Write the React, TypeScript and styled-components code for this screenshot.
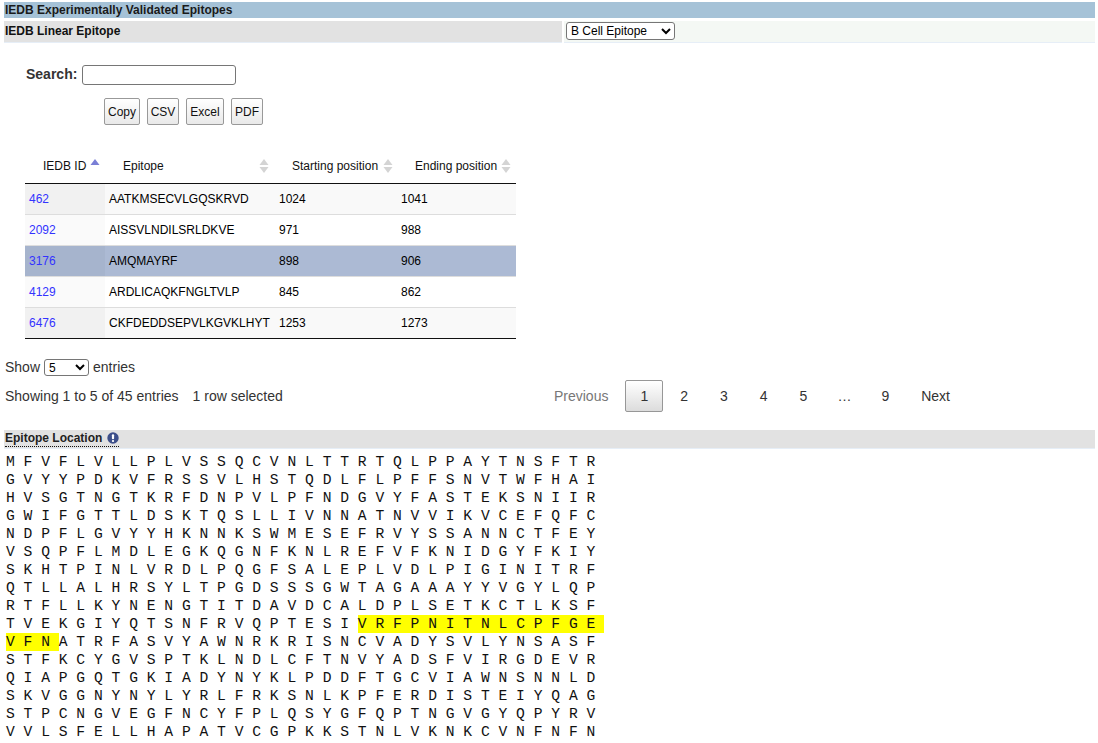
import React from "react";
import styled, { createGlobalStyle } from "styled-components";

const Global = createGlobalStyle`
  html, body { margin: 0; padding: 0; height: 743px; overflow: hidden; background: #fff; }
  body { font-family: "Liberation Sans", Arial, sans-serif; color: #000; }
`;

const Page = styled.div`
  width: 1098px;
  padding: 2px 3px 0 4px;
  box-sizing: border-box;
`;
const TitleBar = styled.div`
  height: 16px;
  line-height: 17px;
  background: #a5c2d7;
  font-size: 12px;
  font-weight: bold;
  color: #1a1a1a;
  padding-left: 1px;
`;
const SubRow = styled.div`
  display: grid;
  grid-template-columns: 558px 1fr;
  column-gap: 2px;
  height: 21px;
  margin-top: 3px;
`;
const SubLabel = styled.div`
  background: #e2e2e2;
  border-bottom: 1px solid #e6eef7;
  font-size: 12px;
  font-weight: bold;
  line-height: 21px;
  padding-left: 1px;
  color: #111;
`;
const SubControl = styled.div`
  background: #f4f8f4;
  border-bottom: 1px solid #e6eef7;
  padding: 1px 0 0 2px;
`;
const NativeSelect = styled.select<{ $w: number }>`
  width: ${(p) => p.$w}px;
  height: ${(p) => (p.$w > 60 ? 18 : 17)}px;
  box-sizing: border-box;
  display: block;
  font-family: "Liberation Sans", Arial, sans-serif;
  font-size: 12px;
  padding: 0;
  background: #fff;
  border: 1px solid #767676;
  border-radius: 3px;
  color: #000;
`;
const SearchRow = styled.div`
  display: flex;
  align-items: center;
  margin: 23px 0 0 22px;
  height: 20px;
`;
const SearchLabel = styled.label`
  font-size: 14px;
  font-weight: bold;
  color: #333;
  margin-right: 5px;
  position: relative;
  top: -1px;
`;
const SearchInput = styled.input`
  width: 154px;
  height: 20px;
  box-sizing: border-box;
  border: 1px solid #767676;
  border-radius: 3px;
  padding: 0 2px;
  background: #fff;
`;
const ButtonRow = styled.div`
  display: flex;
  gap: 7px;
  margin: 13px 0 0 100px;
`;
const ToolButton = styled.button<{ $w: number }>`
  width: ${(p) => p.$w}px;
  height: 27px;
  box-sizing: border-box;
  padding: 0;
  border: 1px solid #999;
  border-radius: 2px;
  background: linear-gradient(#fff, #e9e9e9);
  font-family: "Liberation Sans", Arial, sans-serif;
  font-size: 12px;
  color: #111;
`;
const Table = styled.table`
  width: 491px;
  margin: 25px 0 0 21px;
  border-collapse: collapse;
  table-layout: fixed;
  font-size: 12px;
`;
const HeadRow = styled.tr`
  height: 33px;
  border-bottom: 1px solid #111;
`;
const HeadCell = styled.th<{ $w: number; $pad: number }>`
  width: ${(p) => p.$w}px;
  padding: 0 0 0 ${(p) => p.$pad}px;
  box-sizing: border-box;
  font-weight: normal;
  text-align: left;
  color: #111;
`;
const HeadInner = styled.div<{ $gap: number }>`
  display: flex;
  align-items: center;
  justify-content: flex-start;
  gap: ${(p) => p.$gap}px;
`;
const Row = styled.tr<{ $bg: string }>`
  height: 31px;
  background: ${(p) => p.$bg};
  border-bottom: 1px solid #ddd;
  &:last-child { border-bottom: 1px solid #111; }
`;
const Cell = styled.td<{ $bg?: string }>`
  padding: 0 0 0 4px;
  box-sizing: border-box;
  white-space: nowrap;
  background: ${(p) => p.$bg || "transparent"};
`;
const IdLink = styled.a`
  color: #3333ff;
  text-decoration: none;
`;
const ShowRow = styled.div`
  display: flex;
  align-items: center;
  gap: 4px;
  margin: 20px 0 0 1px;
  height: 17px;
  font-size: 14px;
  color: #333;
`;
const FooterRow = styled.div`
  display: flex;
  justify-content: space-between;
  align-items: center;
  width: 960px;
  margin: 4px 0 0 1px;
  font-size: 14px;
  color: #333;
`;
const Info = styled.div`
  display: flex;
  gap: 14px;
`;
const Pager = styled.div`
  display: flex;
`;
const PageButton = styled.span<{ $current?: boolean; $muted?: boolean }>`
  box-sizing: border-box;
  height: 32px;
  line-height: 30px;
  padding: 0 14px;
  margin-left: 2px;
  border: 1px solid ${(p) => (p.$current ? "#979797" : "transparent")};
  border-radius: 2px;
  color: ${(p) => (p.$muted ? "#777" : "#333")};
  background: ${(p) => (p.$current ? "linear-gradient(#fff, #dcdcdc)" : "transparent")};
`;
const Ellipsis = styled.span`
  line-height: 32px;
  padding: 0 13px;
  margin-left: 2px;
  color: #333;
`;
const SectionBar = styled.div`
  display: flex;
  align-items: center;
  height: 18px;
  margin-top: 18px;
  background: #e2e2e2;
  border-bottom: 1px solid #e6eef7;
  padding-left: 1px;
`;
const SectionTitle = styled.span`
  display: inline-flex;
  align-items: center;
  gap: 5px;
  font-size: 12px;
  font-weight: bold;
  color: #222;
  border-bottom: 1px dotted #111;
  height: 16px;
  line-height: 14px;
`;
const Sequence = styled.div`
  margin-top: 4px;
  padding-left: 2px;
  font-family: "Liberation Mono", "Courier New", monospace;
  font-size: 14.667px;
  line-height: 18px;
  color: #111;
`;
const SeqLine = styled.div`
  white-space: pre;
  height: 18px;
`;
const Highlight = styled.span`
  background: #ffff00;
  padding: 1px 0;
`;

const SortIcon = ({ up = "#d4d4d4", down = "#d4d4d4" }: { up?: string; down?: string }) => (
  <svg width="10" height="16" viewBox="0 0 10 16" aria-hidden="true">
    <path d="M0.5 7 L5 1 L9.5 7 Z" fill={up} />
    <path d="M0.5 9 L9.5 9 L5 15 Z" fill={down} />
  </svg>
);

const InfoIcon = () => (
  <svg width="12" height="12" viewBox="0 0 12 12" aria-hidden="true">
    <circle cx="6" cy="6" r="5.7" fill="#3d4f8a" />
    <rect x="4.9" y="2.2" width="2.2" height="5" rx="1" fill="#fff" />
    <rect x="4.9" y="8" width="2.2" height="2" rx="1" fill="#fff" />
  </svg>
);

const rows = [
  { id: "462", ep: "AATKMSECVLGQSKRVD", s: "1024", e: "1041", bg: "#f9f9f9", side: "#f1f1f1" },
  { id: "2092", ep: "AISSVLNDILSRLDKVE", s: "971", e: "988", bg: "#ffffff", side: "#fafafa" },
  { id: "3176", ep: "AMQMAYRF", s: "898", e: "906", bg: "#acbad4", side: "#a6b4cd" },
  { id: "4129", ep: "ARDLICAQKFNGLTVLP", s: "845", e: "862", bg: "#ffffff", side: "#fafafa" },
  { id: "6476", ep: "CKFDEDDSEPVLKGVKLHYT", s: "1253", e: "1273", bg: "#f9f9f9", side: "#f1f1f1" },
];

const seq: { t: string; from?: number; to?: number }[] = [
  { t: "MFVFLVLLPLVSSQCVNLTTRTQLPPAYTNSFTR" },
  { t: "GVYYPDKVFRSSVLHSTQDLFLPFFSNVTWFHAI" },
  { t: "HVSGTNGTKRFDNPVLPFNDGVYFASTEKSNIIR" },
  { t: "GWIFGTTLDSKTQSLLIVNNATNVVIKVCEFQFC" },
  { t: "NDPFLGVYYHKNNKSWMESEFRVYSSANNCTFEY" },
  { t: "VSQPFLMDLEGKQGNFKNLREFVFKNIDGYFKIY" },
  { t: "SKHTPINLVRDLPQGFSALEPLVDLPIGINITRF" },
  { t: "QTLLALHRSYLTPGDSSSGWTAGAAAYYVGYLQP" },
  { t: "RTFLLKYNENGTITDAVDCALDPLSETKCTLKSF" },
  { t: "TVEKGIYQTSNFRVQPTESIVRFPNITNLCPFGE", from: 20, to: 34 },
  { t: "VFNATRFASVYAWNRKRISNCVADYSVLYNSASF", from: 0, to: 3 },
  { t: "STFKCYGVSPTKLNDLCFTNVYADSFVIRGDEVR" },
  { t: "QIAPGQTGKIADYNYKLPDDFTGCVIAWNSNNLD" },
  { t: "SKVGGNYNYLYRLFRKSNLKPFERDISTEIYQAG" },
  { t: "STPCNGVEGFNCYFPLQSYGFQPTNGVGYQPYRV" },
  { t: "VVLSFELLHAPATVCGPKKSTNLVKNKCVNFNFN" },
];

const spaced = (s: string) => s.split("").map((c) => c + " ").join("");

export default function App() {
  return (
    <Page>
      <Global />
      <TitleBar>IEDB Experimentally Validated Epitopes</TitleBar>
      <SubRow>
        <SubLabel>IEDB Linear Epitope</SubLabel>
        <SubControl>
          <NativeSelect $w={109} defaultValue="B Cell Epitope">
            <option>B Cell Epitope</option>
            <option>T Cell Epitope</option>
          </NativeSelect>
        </SubControl>
      </SubRow>
      <SearchRow>
        <SearchLabel>Search:</SearchLabel>
        <SearchInput type="text" />
      </SearchRow>
      <ButtonRow>
        <ToolButton $w={36}>Copy</ToolButton>
        <ToolButton $w={32}>CSV</ToolButton>
        <ToolButton $w={38}>Excel</ToolButton>
        <ToolButton $w={32}>PDF</ToolButton>
      </ButtonRow>
      <Table>
        <thead>
          <HeadRow>
            <HeadCell $w={80} $pad={18}>
              <HeadInner $gap={4}>
                IEDB ID <SortIcon up="#7a7fd6" down="transparent" />
              </HeadInner>
            </HeadCell>
            <HeadCell $w={170} $pad={18}>
              <HeadInner $gap={95}>
                Epitope <SortIcon />
              </HeadInner>
            </HeadCell>
            <HeadCell $w={122} $pad={17}>
              <HeadInner $gap={5}>
                Starting position <SortIcon />
              </HeadInner>
            </HeadCell>
            <HeadCell $w={119} $pad={18}>
              <HeadInner $gap={4}>
                Ending position <SortIcon />
              </HeadInner>
            </HeadCell>
          </HeadRow>
        </thead>
        <tbody>
          {rows.map((r) => (
            <Row key={r.id} $bg={r.bg}>
              <Cell $bg={r.side}>
                <IdLink href="#">{r.id}</IdLink>
              </Cell>
              <Cell>{r.ep}</Cell>
              <Cell>{r.s}</Cell>
              <Cell>{r.e}</Cell>
            </Row>
          ))}
        </tbody>
      </Table>
      <ShowRow>
        Show
        <NativeSelect $w={45} defaultValue="5">
          <option>5</option>
          <option>10</option>
          <option>25</option>
        </NativeSelect>
        entries
      </ShowRow>
      <FooterRow>
        <Info>
          <span>Showing 1 to 5 of 45 entries</span>
          <span>1 row selected</span>
        </Info>
        <Pager>
          <PageButton $muted>Previous</PageButton>
          <PageButton $current>1</PageButton>
          <PageButton>2</PageButton>
          <PageButton>3</PageButton>
          <PageButton>4</PageButton>
          <PageButton>5</PageButton>
          <Ellipsis>…</Ellipsis>
          <PageButton>9</PageButton>
          <PageButton>Next</PageButton>
        </Pager>
      </FooterRow>
      <SectionBar>
        <SectionTitle>
          Epitope Location <InfoIcon />
        </SectionTitle>
      </SectionBar>
      <Sequence>
        {seq.map((l) => (
          <SeqLine key={l.t}>
            {l.from === undefined ? (
              spaced(l.t)
            ) : (
              <>
                {spaced(l.t.slice(0, l.from))}
                <Highlight>{spaced(l.t.slice(l.from, l.to))}</Highlight>
                {spaced(l.t.slice(l.to))}
              </>
            )}
          </SeqLine>
        ))}
      </Sequence>
    </Page>
  );
}
